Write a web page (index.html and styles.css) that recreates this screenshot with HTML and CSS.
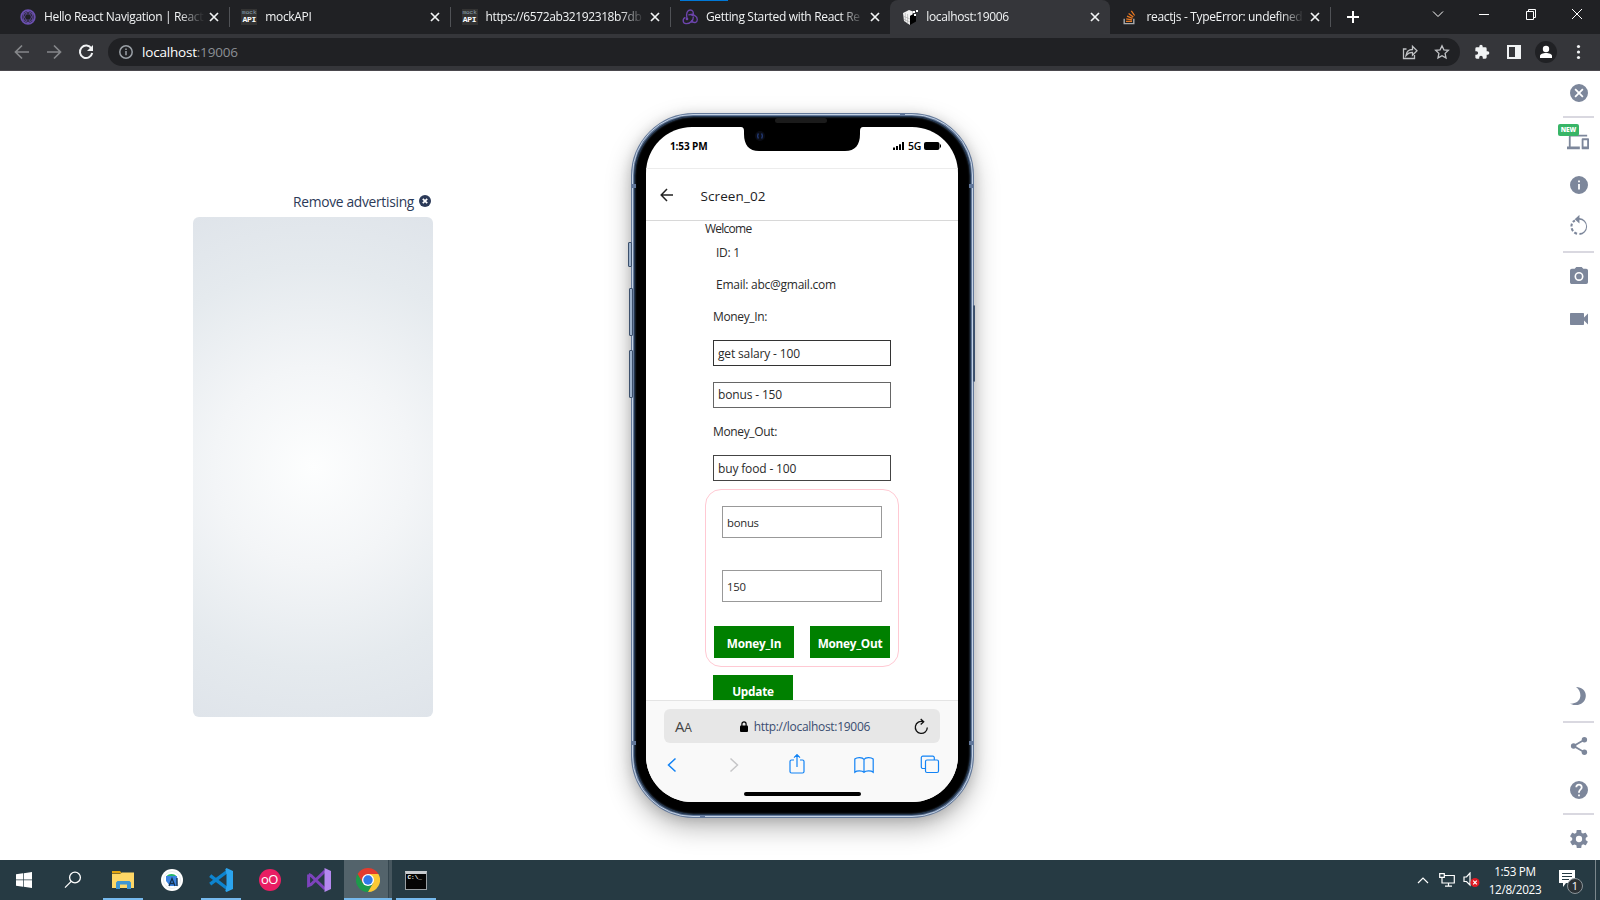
FILE: index.html
```html
<!DOCTYPE html>
<html lang="en">
<head>
<meta charset="utf-8">
<title>localhost:19006</title>
<link rel="stylesheet" href="styles.css">
</head>
<body>
<header class="tabstrip">
  <div class="tab">
    <svg class="fav" viewBox="0 0 16 16" fill="none" stroke="#6b50b0"><circle cx="8" cy="8" r="6.900" stroke-width="1.600"/><path d="M8 2.200 13 5v6L8 13.800 3 11V5z" stroke-width=".9"/><path d="M8 1.800l5.200 9.200H2.800zM8 14.200L2.800 5h10.400z" stroke-width=".6"/></svg>
    <span class="title">Hello React Navigation | React</span>
    <svg class="x" viewBox="0 0 10 10"><path d="M1 1l8 8M9 1l-8 8"/></svg>
  </div>
  <div class="tab sep">
    <span class="mock"><i>mock</i><b>API</b></span>
    <span class="title">mockAPI</span>
    <svg class="x" viewBox="0 0 10 10"><path d="M1 1l8 8M9 1l-8 8"/></svg>
  </div>
  <div class="tab sep">
    <span class="mock"><i>mock</i><b>API</b></span>
    <span class="title t3">https://6572ab32192318b7db</span>
    <svg class="x" viewBox="0 0 10 10"><path d="M1 1l8 8M9 1l-8 8"/></svg>
  </div>
  <div class="tab sep">
    <svg class="fav" viewBox="0 0 16 16" fill="none" stroke="#6d45ae" stroke-width="1.300"><path d="M5 9.500C3.600 4.500 5.500 1 8.200 1c2.600 0 3.600 2.300 3 4.700M6.300 6c4.500-1.700 9 1.300 9 4.600 0 3-2.800 3.600-4.800 2.100M11.400 7.500c.2 4-3.700 7.500-7.400 7.200-3.300-.4-4-4.500-.6-6.300"/><circle cx="10.500" cy="5.800" r=".7"/><circle cx="5" cy="10" r=".7"/><circle cx="10" cy="12.400" r=".7"/></svg>
    <span class="title t4">Getting Started with React Re</span>
    <svg class="x" viewBox="0 0 10 10"><path d="M1 1l8 8M9 1l-8 8"/></svg>
  </div>
  <div class="tab active">
    <svg class="fav" viewBox="0 0 16 16"><path fill="#f2f2f2" d="M1 4l6-3 4 1.500-.5 3L8 7v9l-6-4z"/><path fill="#000" d="M8 7l3-1.500 3 .5v6.500L8 16z"/><path stroke="#999" stroke-width=".5" fill="none" d="M1 7l7 3M1.500 10l6.500 3M3.300 4v8.500M5.600 5v10"/><path fill="#fff" d="M11 2h2v2h-2zM14 1h2v2h-2zM12 5h2v2h-2z"/></svg>
    <span class="title">localhost:19006</span>
    <svg class="x" viewBox="0 0 10 10"><path d="M1 1l8 8M9 1l-8 8"/></svg>
  </div>
  <div class="tab last">
    <svg class="fav" viewBox="0 0 16 16" fill="none"><path stroke="#a9abad" stroke-width="1.400" d="M2.200 9.800v4.800h9.600V9.800"/><path stroke="#e87922" stroke-width="1.300" d="M4 12.400h6M4.200 9.900l5.800.9M5 7.200l5.500 2.200M6.600 4.400l4.700 3.600M9.300 1.800l3.300 4.700"/></svg>
    <span class="title">reactjs - TypeError: undefined</span>
    <svg class="x" viewBox="0 0 10 10"><path d="M1 1l8 8M9 1l-8 8"/></svg>
  </div>
  <div class="newtab"><svg width="12" height="12" viewBox="0 0 12 12"><path d="M6 0v12M0 6h12" stroke="#fff" stroke-width="2"/></svg></div>
  <div class="wincontrols">
    <svg width="12" height="12" viewBox="0 0 12 12"><path d="M1 3.500l5 5 5-5"/></svg>
    <svg width="12" height="12" viewBox="0 0 12 12"><path d="M1 6.500h10"/></svg>
    <svg width="12" height="12" viewBox="0 0 12 12"><path d="M1.500 3.500h7v8h-7zM3.500 3.500v-2h7v8h-2"/></svg>
    <svg width="12" height="12" viewBox="0 0 12 12"><path d="M1 1l10 10M11 1L1 11"/></svg>
  </div>
</header>

<nav class="toolbar">
  <svg class="tb dim" viewBox="0 0 16 16"><path d="M15 8H2M8 1.500L1.500 8 8 14.500"/></svg>
  <svg class="tb dim" viewBox="0 0 16 16"><path d="M1 8h13M8 1.500L14.500 8 8 14.500"/></svg>
  <svg class="tb" viewBox="0 0 16 16"><path d="M13.400 4.500A6.200 6.200 0 1 0 14.200 9" stroke-width="2"/><path d="M15 1v6H9z" fill="#f1f3f4" stroke="none"/></svg>
  <div class="omnibox">
    <svg class="info" viewBox="0 0 14 14"><circle cx="7" cy="7" r="6.200"/><path d="M7 6v4.300M7 3.400v1.500"/></svg>
    <span class="address">localhost<em>:19006</em></span>
    <svg class="ob share" viewBox="0 0 16 16"><path d="M4.500 5H1.500v9.500h11V11M4 11.500c.5-4 3-6 6.500-6V2.300L15 6.800l-4.500 4.400V8.300C8 8.300 5.500 9.500 4 11.500z"/></svg>
    <svg class="ob" viewBox="0 0 16 16"><path d="M8 1.700l1.900 4.100 4.500.5-3.300 3.100.9 4.500L8 11.700l-4 2.200.9-4.500L1.600 6.300l4.500-.5z"/></svg>
  </div>
  <div class="actions">
    <svg viewBox="0 0 24 24"><path fill="#f1f3f4" d="M20.500 11H19V7a2 2 0 0 0-2-2h-4V3.500a2.500 2.500 0 0 0-5 0V5H4a2 2 0 0 0-2 2v3.800h1.500a2.700 2.700 0 0 1 0 5.400H2V20c0 1.100.9 2 2 2h3.800v-1.500a2.700 2.700 0 0 1 5.400 0V22H17a2 2 0 0 0 2-2v-4h1.500a2.500 2.500 0 0 0 0-5z"/></svg>
    <svg viewBox="0 0 16 16"><path fill="#f1f3f4" fill-rule="evenodd" d="M1 1h14v14H1zM3 3v10h6V3z"/></svg>
    <span class="avatar"><svg viewBox="0 0 14 14" fill="#fff"><circle cx="7" cy="4" r="3.200"/><path d="M1 13v-2c0-2 3-3 6-3s6 1 6 3v2z"/></svg></span>
    <svg viewBox="0 0 16 16" fill="#f1f3f4"><circle cx="8.500" cy="2.500" r="1.600"/><circle cx="8.500" cy="8" r="1.600"/><circle cx="8.500" cy="13.500" r="1.600"/></svg>
  </div>
</nav>

<main class="stage">
  <aside class="ad">
    <div class="ad-label"><span>Remove advertising</span><svg width="12" height="12" viewBox="0 0 12 12"><circle cx="6" cy="6" r="6" fill="#2c3a58"/><path d="M3.800 3.800l4.400 4.400M8.200 3.800L3.800 8.200" stroke="#fff" stroke-width="1.700"/></svg></div>
    <div class="ad-box"></div>
  </aside>

  <section class="phone">
    <i class="key k1"></i><i class="key k2"></i><i class="key k3"></i><i class="key k4"></i>
    <i class="band b1"></i><i class="band b2"></i><i class="band b3"></i><i class="band b4"></i><i class="band b5"></i><i class="band b6"></i>
    <i class="speaker"></i>
    <div class="screen">
      <svg class="notch" viewBox="0 0 122 26"><path d="M0 0c2 0 3 1.500 3 4v3c0 11 5 17 15 17h86c10 0 15-6 15-17V4c0-2.500 1-4 3-4z"/><circle cx="19" cy="9" r="5" fill="#0a0c14"/><path d="M17.500 6.500c-1 1.500-1 3.500 0 5M20.500 6.500c1 1.500 1 3.500 0 5" stroke="#20366e" stroke-width="1.400" fill="none"/></svg>
      <div class="status">
        <span class="clock">1:53 PM</span>
        <svg class="bars" width="11" height="8" viewBox="0 0 11 8"><path d="M0 5.500h2V8H0zM3 4h2v4H3zM6 2.300h2V8H6zM9 0h2v8H9z"/></svg>
        <span class="net">5G</span>
        <svg width="17" height="8" viewBox="0 0 17 8"><rect width="15.500" height="8" rx="2"/><path d="M16 2.500h1v3h-1z"/></svg>
      </div>
      <div class="apphead">
        <svg width="14" height="14" viewBox="0 0 14 14"><path d="M13 7H1.500M7 1L1.200 7 7 13" fill="none" stroke="#222" stroke-width="1.500"/></svg>
        <h1>Screen_02</h1>
      </div>
      <div class="content">
        <p class="welcome">Welcome</p>
        <p class="line id">ID: 1</p>
        <p class="line email">Email: abc@gmail.com</p>
        <p class="head h-in">Money_In:</p>
        <div class="item i1">get salary - 100</div>
        <div class="item mid i2">bonus - 150</div>
        <p class="head h-out">Money_Out:</p>
        <div class="item i3">buy food - 100</div>
        <div class="form">
          <div class="field f1">bonus</div>
          <div class="field f2">150</div>
          <div class="btns"><div class="btn">Money_In</div><div class="btn">Money_Out</div></div>
        </div>
        <div class="btn update">Update</div>
      </div>
      <div class="safari">
        <div class="url">
          <span class="aa">A<small>A</small></span>
          <span class="mid-url"><svg width="8" height="11" viewBox="0 0 8 11"><rect y="4.500" width="8" height="6.500" rx="1"/><path d="M1.900 5V3a2.100 2.100 0 0 1 4.200 0v2" fill="none" stroke="#000" stroke-width="1.200"/></svg><span class="url-text">http://localhost:19006</span></span>
          <svg width="15" height="17" viewBox="0 0 15 17" fill="none" stroke="#111" stroke-width="1.300"><path d="M9.200 3.700A6 6 0 1 0 13.300 9.500M6.700 1l3 2.800-3 2.800"/></svg>
        </div>
        <div class="navrow">
          <svg width="20" height="20" viewBox="0 0 20 20"><path d="M13.500 3.500L6.500 10l7 6.500" stroke-width="1.500"/></svg>
          <svg width="20" height="20" viewBox="0 0 20 20"><path d="M6.500 3.500l7 6.500-7 6.500" stroke="#c6c6c8" stroke-width="1.500"/></svg>
          <svg width="20" height="20" viewBox="0 0 20 20"><path d="M7 5H4.500A1.500 1.500 0 0 0 3 6.500v10A1.500 1.500 0 0 0 4.500 18h11a1.500 1.500 0 0 0 1.500-1.500v-10A1.500 1.500 0 0 0 15.500 5H13M10 12V-.5M7 2.700L10-.3l3 3" /></svg>
          <svg width="20" height="20" viewBox="0 0 20 20"><path d="M10 4.500C8.500 2 3 2 .8 4v13.200c2-1.800 7.500-1.800 9.200.2 1.700-2 7.200-2 9.200-.2V4C17 2 11.500 2 10 4.500zM10 4.500v13"/></svg>
          <svg width="20" height="20" viewBox="0 0 20 20"><rect x="5.500" y="5" width="13" height="12.500" rx="1.500"/><path d="M5.500 13.500H3A1.500 1.500 0 0 1 1.300 12V2.700A1.500 1.500 0 0 1 2.800 1.200h10a1.500 1.500 0 0 1 1.500 1.500V5"/></svg>
        </div>
        <div class="homebar"></div>
      </div>
    </div>
  </section>

  <aside class="tools">
    <svg class="g close" viewBox="2 2 20 20"><path d="M12 2a10 10 0 1 0 0 20 10 10 0 0 0 0-20zm5 13.600L15.600 17 12 13.400 8.400 17 7 15.600l3.600-3.600L7 8.400 8.400 7l3.600 3.600L15.600 7 17 8.400 13.400 12z"/></svg>
    <hr>
    <div class="devices"><svg viewBox="0 4 24 16"><path d="M4 6h18V4H4a2 2 0 0 0-2 2v11H0v3h14v-3H4zm19 2h-6a1 1 0 0 0-1 1v10c0 .6.400 1 1 1h6c.6 0 1-.4 1-1V9c0-.6-.5-1-1-1zm-1 9h-4v-7h4z"/></svg><span class="new">NEW</span></div>
    <svg class="g info2" viewBox="2 2 20 20"><path d="M12 2a10 10 0 1 0 0 20 10 10 0 0 0 0-20zm1 15h-2v-6h2zm0-8h-2V7h2z"/></svg>
    <svg class="g rot" viewBox="2 1 20 22"><path d="M13 4.100V.8L8 5.400 13 10V6a7 7 0 0 1 0 14v2a9 9 0 0 0 0-17.900z"/><path d="M10.500 20.600A8 8 0 0 1 5.200 9.700a8 8 0 0 1 3-3.200" fill="none" stroke="#7d879b" stroke-width="2.200" stroke-dasharray="3.200 1.900"/></svg>
    <hr>
    <svg class="g cam" viewBox="2 2 20 20"><path fill-rule="evenodd" d="M9 2L7.200 4H4a2 2 0 0 0-2 2v13c0 1.100.9 2 2 2h16a2 2 0 0 0 2-2V6a2 2 0 0 0-2-2h-3.200L15 2zm3 15.500a5 5 0 1 1 0-10 5 5 0 0 1 0 10zm0-1.800a3.200 3.200 0 1 0 0-6.400 3.200 3.200 0 0 0 0 6.400z"/></svg>
    <svg class="g vid" viewBox="3 3 18 18"><path d="M17 10.500V7c0-.6-.4-1-1-1H4c-.6 0-1 .4-1 1v10c0 .6.400 1 1 1h12c.6 0 1-.4 1-1v-3.500l4 4v-11z"/></svg>
    <div class="grow"></div>
    <svg class="g moon" viewBox="0 0 18 18"><path d="M7 0C13.500 0 17.500 4.500 16.700 10 15.800 17 7.500 20.500.8 16.600 6.500 17 10.800 14 11.300 9.500 11.700 6 10.500 2.500 7 0z"/></svg>
    <hr>
    <svg class="g shr" viewBox="3 2 18 20"><circle cx="18" cy="5" r="3"/><circle cx="6" cy="12" r="3"/><circle cx="18" cy="19" r="3"/><path d="M18 5L6 12l12 7" fill="none" stroke="#7d879b" stroke-width="2"/></svg>
    <svg class="g hlp" viewBox="2 2 20 20"><path d="M12 2a10 10 0 1 0 0 20 10 10 0 0 0 0-20zm1 17h-2v-2h2zm2.100-7.700l-.9.900C13.400 12.900 13 13.500 13 15h-2v-.5c0-1.100.5-2.100 1.200-2.800l1.200-1.300c.4-.3.600-.8.600-1.400a2 2 0 0 0-4 0H8a4 4 0 0 1 8 0c0 .9-.4 1.700-.9 2.300z"/></svg>
    <hr>
    <svg class="g gear" viewBox="2 2 20 20"><path d="M19.400 13c0-.3.100-.6.100-1s0-.7-.1-1l2.100-1.700c.2-.1.200-.4.100-.6l-2-3.500c-.1-.2-.4-.3-.6-.2l-2.500 1c-.5-.4-1.100-.7-1.700-1l-.4-2.600a.5.500 0 0 0-.5-.4h-4c-.2 0-.5.200-.5.400L9 5.100c-.6.200-1.200.6-1.700 1l-2.500-1c-.2-.1-.5 0-.6.200l-2 3.400c-.1.200-.1.500.1.600L4.500 11a8 8 0 0 0 0 2l-2.100 1.700c-.2.100-.2.400-.1.600l2 3.500c.1.200.4.300.6.200l2.500-1c.5.400 1.100.7 1.700 1l.4 2.600c0 .2.200.4.500.4h4c.3 0 .5-.2.500-.4l.4-2.700c.6-.2 1.200-.6 1.700-1l2.500 1c.2.100.5 0 .6-.2l2-3.400c.1-.2.100-.5-.1-.6zM12 15.500a3.500 3.500 0 1 1 0-7 3.500 3.500 0 0 1 0 7z"/></svg>
  </aside>
</main>

<footer class="taskbar">
  <div class="app start"><svg width="16" height="16" viewBox="0 0 16 16" fill="#fff"><path d="M0 2.300L7 1.300v6.300H0zM7.700 1.200L16 0v7.600H7.700zM0 8.300h7v6.400l-7-1zM7.700 8.300H16V16l-8.300-1.200z"/></svg></div>
  <div class="app find"><svg width="18" height="18" viewBox="0 0 18 18" fill="none" stroke="#fff" stroke-width="1.300"><circle cx="11" cy="6.500" r="5.400"/><path d="M7.200 10.400L1 16.600"/></svg></div>
  <div class="app run"><svg width="22" height="20" viewBox="0 0 22 20"><path fill="#e5a50f" d="M0 1h8l2 2.500H0z"/><path fill="#ffd766" d="M0 4h8l2-1.500h12V18H0z"/><path fill="#3f96d2" d="M4 12.500l1.500-1.500h12l1.500 1.500V19h-4v-4.500H8V19H4z"/></svg></div>
  <div class="app"><svg width="22" height="22" viewBox="0 0 22 22"><circle cx="11" cy="11" r="11" fill="#fff"/><circle cx="11" cy="11" r="8.500" fill="none" stroke="#dfe4e8" stroke-width=".8"/><path fill="#25b56a" d="M5 8a6 5 0 0 1 11 0z"/><path fill="#3b83e0" d="M5 7h11l.5 10H9L5 12z"/><path d="M8 17l3-7.500 3 7.500M9 14.500h4M16 9v8" stroke="#12304e" stroke-width="1.300" fill="none"/></svg></div>
  <div class="app run"><svg width="24" height="24" viewBox="0 0 24 24"><path d="M1.200 7.600L17.500 20M1.200 16.200L17.500 4" stroke="#0d84cf" stroke-width="3.400"/><path fill="#2ba4ee" d="M17.500 0L24 3v18l-6.500 3-1.200-1 1.200-5V6.200l-1.200-5z"/></svg></div>
  <div class="app"><span class="oo">oO</span></div>
  <div class="app"><svg width="24" height="24" viewBox="0 0 24 24"><path fill="none" stroke="#7d43bd" stroke-width="3" d="M1.600 6.500v11L4 16.500 18 3M1.600 6.500L4 7.500 18 21"/><path fill="#b588f0" d="M17.500 0L24 3v18l-6.500 3z"/></svg></div>
  <div class="app chrome run"><svg width="24" height="24" viewBox="0 0 24 24"><path fill="#1e9a4b" d="M1.600 6A12 12 0 0 0 12 24l5.200-9L12 12z"/><path fill="#fcc934" d="M12 24l5.200-9L12 6h10.400A12 12 0 0 1 12 24z"/><path fill="#e33b2e" d="M1.600 6A12 12 0 0 1 22.400 6H12v6l-5.200 3z"/><circle cx="12" cy="12" r="6" fill="#fff"/><circle cx="12" cy="12" r="4.700" fill="#3079e8"/></svg></div>
  <div class="app run cmd"><div class="term"><b>C:\_</b></div></div>
  <div class="tray">
    <svg class="up" width="12" height="8" viewBox="0 0 12 8"><path d="M1 7l5-5 5 5"/></svg>
    <svg class="lan" width="16" height="14" viewBox="0 0 16 14"><path d="M5 2.500h10.300v7.500H3V6M9.500 10v3M6 13.200h7M.7.700h4.600v3.600H.7zM3 4.300V7"/></svg>
    <svg class="snd" width="17" height="16" viewBox="0 0 17 16"><path d="M1 5h2.500L7 1v12L3.500 9.500H1z"/><circle cx="12" cy="10.500" r="4.500" fill="#e01b24" stroke="none"/><path d="M10.200 8.700l3.600 3.600M13.800 8.700l-3.600 3.600"/></svg>
    <div class="time"><span>1:53 PM</span><span>12/8/2023</span></div>
    <div class="notif"><svg width="16" height="17" viewBox="0 0 16 17"><path fill="#fff" d="M0 0h16v13H7l-3 4v-4H0z"/><path stroke="#263a43" d="M3 3.500h10M3 6.500h10M3 9.500h7"/></svg><span>1</span></div>
    <i class="peek"></i>
  </div>
</footer>
</body>
</html>
```
FILE: styles.css
```css
* { box-sizing: border-box; }
body {
  margin: 0;
  width: 1600px;
  height: 900px;
  overflow: hidden;
  display: flex;
  flex-direction: column;
  background: #fff;
  font-family: "Open Sans", "Noto Sans", sans-serif;
}
p, h1 { margin: 0; font-weight: 400; }
svg { display: block; flex: none; }
i, em { font-style: normal; }

/* Tab strip */
.tabstrip {
  height: 34px;
  flex: none;
  display: flex;
  padding-left: 9px;
  background: #202124;
  color: #f1f3f4;
}
.tab {
  width: 220.300px;
  flex: none;
  display: flex;
  align-items: center;
  padding: 0 10px 0 11px;
  position: relative;
}
.tab.sep, .tab.active { padding-left: 12px; }
.tab.last { padding-left: 12px; width: 220px; }
.tab.sep::before {
  content: "";
  position: absolute;
  left: 0;
  top: 7px;
  width: 1px;
  height: 20px;
  background: #505256;
}
.tab:nth-child(4)::after {
  content: "";
  position: absolute;
  left: 10px;
  top: 0;
  width: 48px;
  height: 1px;
  background: #0078d7;
}
.tab.active { background: #35363a; border-radius: 8px 8px 0 0; }
.fav { width: 16px; height: 16px; }
.mock {
  width: 16px;
  height: 16px;
  flex: none;
  display: flex;
  flex-direction: column;
  align-items: center;
  background: #333;
  font: 6px/7px "Liberation Mono", monospace;
  color: #8fa6b5;
}
.mock b { font-size: 8px; line-height: 8px; color: #fff; letter-spacing: -.3px; }
.title {
  flex: 1;
  margin: 0 5px 0 8px;
  white-space: nowrap;
  font-size: 12px;
  line-height: 18px;
  letter-spacing: -.34px;
  -webkit-mask-image: linear-gradient(90deg, #000 85%, rgba(0, 0, 0, .1) 98%);
  mask-image: linear-gradient(90deg, #000 85%, rgba(0, 0, 0, .1) 98%);
}
.t3 { letter-spacing: -.4px; }
.t4 { letter-spacing: -.32px; }
.x { width: 10px; height: 10px; fill: none; stroke: #f1f3f4; stroke-width: 1.7; }
.newtab {
  display: flex;
  align-items: center;
  padding-left: 16px;
  border-left: 1px solid #505256;
  height: 20px;
  margin-top: 7px;
}
.wincontrols { margin-left: auto; display: flex; gap: 34.500px; padding: 8px 17px 0 0; }
.wincontrols svg { fill: none; stroke: #fff; stroke-width: 1; }

/* Toolbar */
.toolbar {
  height: 37px;
  flex: none;
  display: flex;
  align-items: center;
  padding: 0 14px;
  background: #35363a;
  border-bottom: 1px solid #4a484d;
}
.tb { width: 16px; height: 16px; margin-right: 16px; fill: none; stroke: #f1f3f4; stroke-width: 1.700; }
.tb.dim { stroke: #85878a; }
.omnibox {
  width: 1352px;
  height: 28px;
  margin-left: -2px;
  display: flex;
  align-items: center;
  padding: 0 10px 0 11px;
  border-radius: 14px;
  background: #202124;
}
.info { width: 14px; height: 14px; fill: none; stroke: #9aa0a6; stroke-width: 1.500; }
.address { flex: 1; margin-left: 9px; font-size: 13.500px; letter-spacing: -.2px; color: #fff; }
.address em { color: #8b8f94; }
.ob { width: 16px; height: 16px; fill: none; stroke: #c0c2c5; stroke-width: 1.300; margin-left: 16px; }
.actions { margin-left: 14px; display: flex; align-items: center; gap: 16px; }
.actions svg { width: 16px; height: 16px; }
.avatar {
  width: 22px;
  height: 22px;
  margin: 0 -3px;
  display: grid;
  place-items: center;
  border-radius: 50%;
  background: #202124;
}
.actions .avatar svg { width: 14px; height: 14px; }

/* Page */
.stage { height: 789px; flex: none; display: flex; background: #fff; }
.ad { width: 240px; margin: 119px 0 0 193px; }
.ad-label {
  height: 27px;
  display: flex;
  justify-content: flex-end;
  align-items: center;
  gap: 5px;
  padding: 0 2px 5px 0;
  color: #2c3a58;
  font-size: 13.800px;
}
.ad-label span { white-space: nowrap; letter-spacing: -.3px; }
.ad-box {
  height: 500px;
  border-radius: 6px;
  background: radial-gradient(circle at 50% 50%, #fdfefe 0, #f3f5f7 100px, #e5eaee 200px, #dfe4ea 277px);
}

/* Phone frame */
.phone {
  position: relative;
  width: 343px;
  height: 705px;
  margin: 42px 0 0 198px;
  padding: 11px 12px;
  border: 3px solid #64799a;
  border-radius: 63px;
  background: #000;
  box-shadow: inset 0 0 0 1px #22364f, inset 0 0 2px 1px #4b6280, 0 10px 26px rgba(0, 0, 0, .28), 0 2px 12px rgba(0, 0, 0, .14);
}
.phone::before {
  content: "";
  position: absolute;
  inset: -2px;
  border: 1px solid #c3d2e4;
  border-radius: 61px;
}
.key { position: absolute; width: 4px; background: #9db2cc; border: 1px solid #3d516d; border-radius: 1px; }
.k1 { left: -6px; top: 126px; height: 25px; }
.k2 { left: -5px; top: 172px; height: 48px; }
.k3 { left: -5px; top: 234px; height: 48px; }
.k4 { right: -4px; top: 189px; height: 77px; width: 2px; }
.band { position: absolute; background: #62789b; width: 5px; height: 4px; }
.b1 { left: -3px; top: 68px; }
.b2 { right: -3px; top: 68px; }
.b3 { left: -3px; bottom: 70px; }
.b4 { right: -3px; bottom: 70px; }
.b5 { right: 66px; top: -3px; height: 3px; }
.b6 { left: 66px; bottom: -3px; height: 3px; }
.speaker { position: absolute; left: 141px; top: 2px; width: 52px; height: 5px; border-radius: 3px; background: #1b1b1b; }
.screen {
  position: relative;
  width: 312px;
  height: 675px;
  overflow: hidden;
  display: flex;
  flex-direction: column;
  border-radius: 46px;
  background: #fff;
}
.notch { position: absolute; left: 95px; top: 0; width: 122px; height: 26px; }
.status {
  height: 42px;
  flex: none;
  display: flex;
  align-items: center;
  padding: 0 17px 4px 24px;
  border-bottom: 1px solid #ececec;
  font-size: 10px;
  font-weight: 700;
  color: #000;
}
.clock { flex: 1; letter-spacing: -.1px; }
.net { margin: 0 3px 0 4px; font-size: 10.500px; font-weight: 600; letter-spacing: -.3px; }
.apphead {
  height: 52px;
  flex: none;
  display: flex;
  align-items: center;
  gap: 26.500px;
  padding: 0 14px 0;
  border-bottom: 1px solid #d8d8d8;
  color: #1c1c1e;
}
.apphead h1 { font-size: 13.500px; letter-spacing: .1px; font-weight: 500; padding-top: 2px; }
.content {
  height: 479px;
  flex: none;
  overflow: hidden;
  padding: 0 59px;
  font-size: 12px;
  line-height: 16px;
  letter-spacing: -.25px;
  color: #2a2a2a;
}
.welcome { margin-top: 0; letter-spacing: -.75px; }
.line { padding-left: 11px; }
.id { margin-top: 8px; }
.email { margin-top: 16px; }
.head { padding-left: 8px; }
.h-in { margin-top: 16px; letter-spacing: -.35px; }
.h-out { margin-top: 16px; letter-spacing: -.35px; }
.item { margin: 0 8px; height: 26px; padding: 5px 4px 0; border: 1px solid #333; letter-spacing: -.15px; }
.i1 { margin-top: 15px; }
.i2 { margin-top: 15.500px; padding-top: 4.500px; border-color: #666; }
.i3 { margin-top: 15.500px; border-color: #444; }
.form {
  width: 194px;
  height: 178px;
  margin-top: 8px;
  padding: 16px 8px 0;
  border: 1px solid #ffc9d3;
  border-radius: 16px;
}
.field { height: 32px; margin: 0 8px; padding: 8px 4px 0; border: 1px solid #999; font-size: 11.300px; }
.f2 { margin-top: 32px; }
.btns { display: flex; gap: 16px; margin-top: 24px; }
.btn {
  width: 80px;
  height: 32px;
  flex: none;
  display: grid;
  place-items: center;
  background: #008000;
  color: #fff;
  font-size: 11.800px;
  font-weight: 700;
  white-space: nowrap;
}
.form .btn { padding-top: 1px; }
.update { margin: 8px 0 0 8px; }

/* Mobile browser bar */
.safari { flex: 1; background: #f9f9f9; border-top: 1px solid #e4e4e4; padding: 8px 0 0; }
.url {
  width: 276px;
  height: 34px;
  margin: 0 auto;
  display: flex;
  align-items: center;
  justify-content: space-between;
  padding: 0 11px;
  border-radius: 6px;
  background: #e7e7e7;
}
.aa { font-size: 15px; color: #444; letter-spacing: -.2px; }
.aa small { font-size: 12px; }
.mid-url { display: flex; align-items: center; gap: 6px; margin-left: 4px; }
.url-text { font-size: 12px; letter-spacing: -.3px; color: #3a4d70; padding-top: 1px; }
.navrow { display: grid; grid-template-columns: 62px 63px 67px 66px 20px; padding: 12px 0 0 16px; height: 48.500px; }
.navrow svg { fill: none; stroke: #1283f5; stroke-width: 1.200; overflow: visible; }
.homebar { width: 117px; height: 4px; margin: 0 auto; border-radius: 2px; background: #000; }

/* Right tool column */
.tools { width: 31px; margin: 0 6px 0 auto; display: flex; flex-direction: column; align-items: center; }
.tools svg { fill: #7d879b; }
.tools hr { width: 31px; height: 2px; margin: 0; border: 0; flex: none; background: #d9d8e0; }
.g { width: 18px; height: 18px; }
.close { margin: 13px 0 14px 0; }
.devices { position: relative; width: 22px; height: 16px; margin: 16px 1px 26px 0; }
.devices svg { width: 22px; height: 16px; }
.new {
  position: absolute;
  left: -9px;
  top: -10px;
  width: 21px;
  height: 12px;
  border-radius: 2px;
  background: #38b567;
  color: #fff;
  font-size: 6.500px;
  line-height: 12px;
  font-weight: 800;
  text-align: center;
}
.rot { width: 19px; height: 21px; margin: 21px 0 15px; }
.cam { margin: 14px 0 24px 0; }
.vid { width: 18px; height: 20px; }
.grow { flex: 1; }
.moon { margin: 0 1px 16px 0; }
.shr { margin: 14px 0 26px 0; }
.hlp { margin: 0 0 14px 0; }
.gear { margin: 15px 0 12px 0; }

/* Taskbar */
.taskbar { height: 40px; flex: none; display: flex; background: #263a43; }
.app { width: 49px; display: grid; place-items: center; position: relative; }
.start svg, .find svg { margin-right: 2px; }
.app.run::after {
  content: "";
  position: absolute;
  left: 5px;
  right: 4px;
  bottom: 0;
  height: 2px;
  background: #76b9ed;
}
.app.chrome { background: linear-gradient(90deg, #53636b 44px, #33444d 44px, #33444d 45px, #46565e 45px); width: 48px; margin-left: 1px; }
.app.chrome.run::after { left: 0; right: 0; }
.cmd { margin-left: -1px; }
.oo {
  width: 22px;
  height: 22px;
  border-radius: 50%;
  background: #e91e63;
  color: #fff;
  font-size: 13px;
  line-height: 20px;
  text-align: center;
  letter-spacing: -.5px;
}
.term {
  width: 22px;
  height: 19px;
  background: #050505;
  border: 1px solid #9aa0a4;
  border-top: 3px solid #c8ccd0;
  color: #fff;
  font: 6px/8px "Liberation Mono", monospace;
  padding-left: 2px;
}
.tray { margin-left: auto; display: flex; align-items: center; }
.tray > svg { fill: none; stroke: #fff; stroke-width: 1.200; }
.up { margin-right: 10px; }
.lan { margin-right: 8px; }
.time {
  width: 70px;
  margin-left: 0;
  padding-bottom: 1px;
  display: flex;
  flex-direction: column;
  align-items: center;
  color: #fff;
  font-size: 11.700px;
  line-height: 18px;
  letter-spacing: -.3px;
}
.notif { position: relative; width: 16px; height: 17px; margin: 0 20px 3px 9px; }
.notif span {
  position: absolute;
  left: 8px;
  top: 8px;
  width: 16px;
  height: 16px;
  border-radius: 50%;
  border: 1px solid #8b9499;
  background: #2b3135;
  color: #fff;
  font-size: 11px;
  line-height: 14px;
  text-align: center;
}
.peek { width: 1px; height: 40px; background: #7b878c; margin-right: 4px; }
```
